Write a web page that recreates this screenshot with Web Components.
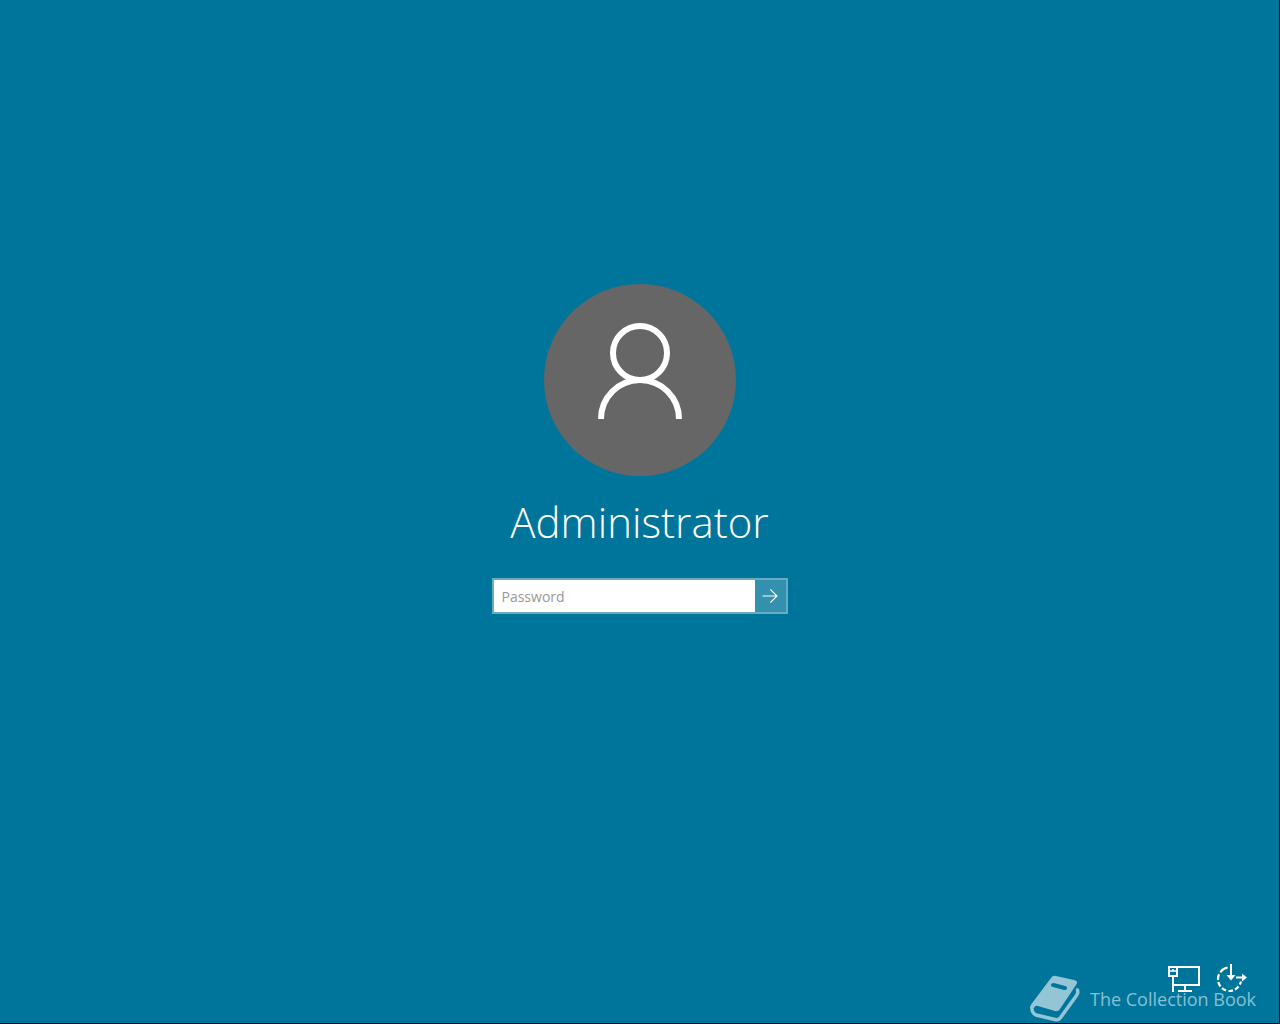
<!DOCTYPE html>
<html lang="en">
<head>
<meta charset="utf-8">
<title>Sign in</title>
<style>
html, body { margin: 0; height: 100%; background: #000; }
body { font-family: "Open Sans", "Noto Sans", sans-serif; color: #fff; }
</style>
</head>
<body>
<lock-screen>
  <user-avatar></user-avatar>
  <user-name>Administrator</user-name>
  <password-field></password-field>
  <network-button slot="tools"></network-button>
  <ease-button slot="tools"></ease-button>
  <brand-mark slot="brand">The Collection Book</brand-mark>
</lock-screen>
<script>
function define(name, html) {
  const t = document.createElement('template');
  t.innerHTML = html;
  customElements.define(name, class extends HTMLElement {
    constructor() {
      super();
      this.attachShadow({ mode: 'open' }).append(t.content.cloneNode(true));
    }
  });
}

define('lock-screen', `
<style>
:host { display: flex; flex-direction: column; position: relative; box-sizing: border-box; min-height: 100vh; background: #00759b; border: solid #000; border-width: 0 1px 1px 0; }
main { flex: 1; display: flex; flex-direction: column; align-items: center; justify-content: center; padding-bottom: 66px; }
footer { display: flex; justify-content: flex-end; gap: 16px; padding: 0 31px 29px; }
</style>
<main><slot></slot></main>
<footer><slot name="tools"></slot></footer>
<slot name="brand"></slot>`);

define('user-avatar', `
<style>
:host { display: block; width: 192px; height: 192px; border-radius: 50%; background: #666; }
svg { display: block; }
</style>
<svg width="192" height="192" viewBox="0 0 192 192" fill="none" stroke="#fff" stroke-width="6" aria-hidden="true">
<circle cx="96" cy="69" r="27"/><path d="M57 135a39 39 0 0 1 78 0"/></svg>`);

define('user-name', `
<style>
:host { display: block; margin-top: 12px; }
h1 { margin: 0; font-size: 42px; line-height: 68px; font-weight: 300; }
</style>
<h1><slot></slot></h1>`);

define('password-field', `
<style>
:host { display: block; margin-top: 22px; }
form { display: flex; box-sizing: border-box; width: 296px; height: 36px; border: 2px solid #66acc3; }
label { display: flex; flex: 1; }
input { flex: 1; min-width: 0; margin: 0; padding: 0 8px; border: 0; outline: 0; border-radius: 0; background: #fff; color: #000; font: 14px "Open Sans", sans-serif; }
input::placeholder { color: #999; opacity: 1; }
button { width: 31px; margin: 0; padding: 0; border: 0; background: #3391af; display: grid; place-items: center; }
</style>
<form><label><input type="password" placeholder="Password" aria-label="Password"></label>
<button type="button" aria-label="Submit"><svg width="16" height="16" viewBox="0 0 16 16" fill="none" stroke="#fff" stroke-width="1.2"><path d="M0.5 8H15M8.300 1.300L15 8L8.300 14.700"/></svg></button></form>`);

const toolStyle = `<style>
:host { display: block; }
button { display: block; margin: 0; padding: 0; border: 0; background: none; }
svg { display: block; }
</style>`;

define('network-button', toolStyle + `
<button type="button" aria-label="Network"><svg width="32" height="30" viewBox="0 0 32 30" fill="none" stroke="#fff" stroke-width="2">
<path d="M10 3H31V21H5M5 12V28M17 21V27M10 27H24"/><path d="M1 3H9V12H1Z"/><path d="M2 7H8M5 5V7" stroke-width="1.500"/></svg></button>`);

define('ease-button', toolStyle + `
<button type="button" aria-label="Ease of access"><svg width="32" height="30" viewBox="0 0 32 30" fill="none" stroke="#fff" stroke-width="2.200">
<path d="M15 0V12" stroke-width="2"/><path d="M10.500 11H19.500L15 16.500Z" fill="#fff" stroke="none"/>
<path d="M20 13.500H27" stroke-width="2"/><path d="M26 9.500L31 13.500L26 17.500Z" fill="#fff" stroke="none"/>
<path d="M11.500 3.500A12 12 0 0 0 4.200 8.300M3 10.300A12 12 0 0 0 2 16M2.300 18A12 12 0 0 0 4.500 22.500M6 24.200A12 12 0 0 0 10 26.500M12.500 27A12 12 0 0 0 17 26.400M19 25.500A12 12 0 0 0 22.500 22.500M23.800 20.500A12 12 0 0 0 25 17.500"/></svg></button>`);

define('brand-mark', `
<style>
:host { position: absolute; right: 23px; bottom: 0; display: flex; align-items: center; gap: 10px; color: #86c0d2; font-size: 18px; line-height: 24px; pointer-events: none; }
svg { display: block; }
</style>
<svg width="50" height="48" viewBox="0 0 50 48" aria-hidden="true">
<path fill="#94c5d6" fill-rule="evenodd" d="M21 3Q23 0 26 1L44 5Q49 6 46 10L30 34Q28 37 25 36L8 31Q5 30 4 33L0 33Q0 30 3 27ZM24 8Q21 8 21 10Q21 12 23 12L34 15Q37 15 37 13Q37 11 35 11Z"/>
<path fill="none" stroke="#94c5d6" stroke-width="3.500" stroke-linecap="round" d="M47.500 15Q48.500 18 46.500 20.500L31 42Q29 45.500 25 44.500L6 40Q1.500 38 2 32.500"/></svg>
<span><slot></slot></span>`);
</script>
</body>
</html>
